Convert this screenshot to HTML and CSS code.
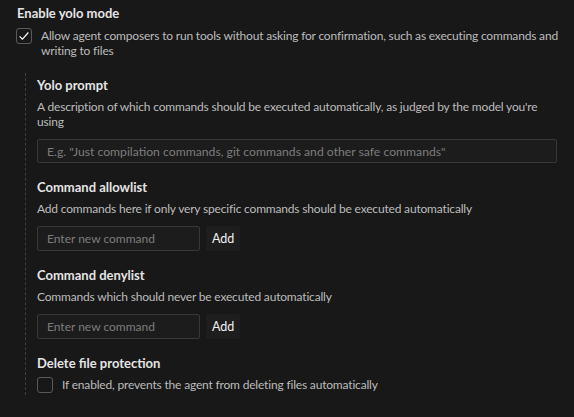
FILE: index.html
```html
<!DOCTYPE html>
<html lang="en">
<head>
  <meta charset="UTF-8">
  <title>Yolo mode settings</title>
  <link rel="stylesheet" href="styles.css">
</head>
<body>
  <div class="settings">
    <div class="setting-title">Enable yolo mode</div>
    <label class="check-row">
      <span class="checkbox checked">
        <svg width="14" height="14" viewBox="0 0 16 16"><path d="M3 8.5l3.2 3.2L13 4" fill="none" stroke="#ffffff" stroke-width="1.3"/></svg>
      </span>
      <span class="check-text">Allow agent composers to run tools without asking for confirmation, such as executing commands and writing to files</span>
    </label>

    <div class="sub-settings">
      <div class="sub-item">
        <div class="sub-title">Yolo prompt</div>
        <div class="sub-desc">A description of which commands should be executed automatically, as judged by the model you're using</div>
        <input class="text-input wide" type="text" placeholder="E.g. &quot;Just compilation commands, git commands and other safe commands&quot;">
      </div>

      <div class="sub-item">
        <div class="sub-title">Command allowlist</div>
        <div class="sub-desc">Add commands here if only very specific commands should be executed automatically</div>
        <div class="add-row">
          <input class="text-input short" type="text" placeholder="Enter new command">
          <button class="add-btn">Add</button>
        </div>
      </div>

      <div class="sub-item">
        <div class="sub-title">Command denylist</div>
        <div class="sub-desc">Commands which should never be executed automatically</div>
        <div class="add-row">
          <input class="text-input short" type="text" placeholder="Enter new command">
          <button class="add-btn">Add</button>
        </div>
      </div>

      <div class="sub-item">
        <div class="sub-title">Delete file protection</div>
        <label class="check-row">
          <span class="checkbox"></span>
          <span class="check-text">If enabled, prevents the agent from deleting files automatically</span>
        </label>
      </div>
    </div>
  </div>
</body>
</html>
```

FILE: styles.css
```css
/* Base */
body {
  margin: 0;
  background: #181818;
  font-family: 'Lato', 'Noto Sans', sans-serif;
  font-size: 12px;
  letter-spacing: -0.18px;
  color: #bcbcbc;
}

.settings {
  padding: 4px 12px 0 17px;
  width: 545px;
}

.setting-title {
  font-size: 13px;
  font-weight: bold;
  color: #e4e4e4;
  line-height: 18px;
  margin-bottom: 6px;
  letter-spacing: 0;
}

/* Checkbox rows */
.check-row {
  display: flex;
  gap: 9px;
  align-items: flex-start;
  line-height: 15px;
}

.checkbox {
  flex: none;
  width: 14px;
  height: 14px;
  border: 1px solid #5a5a5a;
  border-radius: 3px;
  display: flex;
  align-items: center;
  justify-content: center;
  margin-left: -1px;
}

/* Nested block with dashed guide */
.sub-settings {
  margin: 15px 0 0 8px;
  border-left: 1px dashed #3e3e3e;
  padding: 3px 0 2px 11px;
  width: 520px;
}

.sub-item {
  margin-bottom: 15px;
}

.sub-item:last-child {
  margin-bottom: 0;
}

.sub-title {
  font-size: 13px;
  font-weight: bold;
  color: #e4e4e4;
  line-height: 18px;
  margin-bottom: 5px;
  letter-spacing: 0;
}

.sub-desc {
  line-height: 15px;
  margin-bottom: 9px;
}

.text-input {
  box-sizing: border-box;
  height: 24px;
  background: #1c1c1c;
  border: 1px solid #383838;
  border-radius: 2px;
  padding: 0 9px;
  font-family: inherit;
  font-size: 12px;
  letter-spacing: 0;
  color: #ccc;
  outline: none;
}

.text-input::placeholder {
  color: #7c7c7c;
}

.wide {
  width: 520px;
  font-size: 12.2px;
  margin-top: 1px;
  vertical-align: top;
}

.short {
  width: 163px;
  height: 25px;
  margin-top: 1px;
}

.add-row {
  display: flex;
  gap: 6px;
}

.add-btn {
  background: #1e1e1e;
  border: none;
  border-radius: 2px;
  color: #f0f0f0;
  font-family: inherit;
  font-size: 12.5px;
  padding: 0 6px;
  height: 25px;
  margin-top: 1px;
  cursor: pointer;
}

.sub-item .check-row {
  margin-top: 3px;
}

.sub-item .checkbox {
  margin-left: 0;
}
```
